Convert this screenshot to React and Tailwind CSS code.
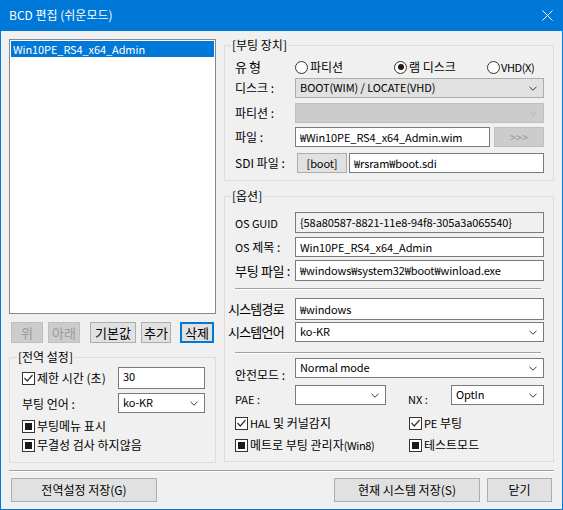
import React from "react";

const LAT = "text-[11px] tracking-[-0.1px]";

function Chevron({ color = "#3c3c3c" }) {
  return (
    <svg width="8" height="5" viewBox="0 0 8 5" className="shrink-0">
      <polyline points="0.5,0.8 4,4.2 7.5,0.8" fill="none" stroke={color} strokeWidth="1" />
    </svg>
  );
}

function Combo({ value, variant = "edit", className = "" }) {
  const v =
    variant === "btn"
      ? "bg-[#e1e1e1] border-[#adadad]"
      : variant === "disabled"
      ? "bg-[#cccccc] border-[#bfbfbf]"
      : "bg-white border-[#7a7a7a]";
  return (
    <div className={`flex items-center justify-between border pl-[4px] pr-[6px] ${v} ${className}`}>
      <span className={`leading-[16px] -mt-[2px] whitespace-nowrap ${LAT}`}>{value}</span>
      <Chevron color={variant === "disabled" ? "#b8b8b8" : "#3c3c3c"} />
    </div>
  );
}

function Input({ value, className = "", readOnly }) {
  return (
    <div
      className={`flex items-center border border-[#7a7a7a] pl-[4px] ${
        readOnly ? "bg-[#f0f0f0]" : "bg-white"
      } ${className}`}
    >
      <span className={`leading-[16px] -mt-[1px] whitespace-nowrap ${LAT}`}>{value}</span>
    </div>
  );
}

function Btn({ children, className = "", disabled, focus }) {
  const v = disabled
    ? "bg-[#cccccc] border border-[#bfbfbf] text-[#9a9a9a]"
    : focus
    ? "bg-[#e1e1e1] border-2 border-[#0078d7]"
    : "bg-[#e1e1e1] border border-[#adadad]";
  return (
    <div className={`flex items-center justify-center leading-[16px] whitespace-nowrap ${v} ${className}`}>
      {children}
    </div>
  );
}

function Check({ type }) {
  return (
    <span className="w-[13px] h-[13px] border border-[#333333] bg-white flex items-center justify-center shrink-0">
      {type === "check" && (
        <svg width="11" height="11" viewBox="0 0 11 11">
          <polyline points="1.5,5 4.3,8 9.5,2" fill="none" stroke="#333333" strokeWidth="1.2" />
        </svg>
      )}
      {type === "fill" && <span className="w-[7px] h-[7px] bg-[#1a1a1a]" />}
    </span>
  );
}

function Radio({ checked }) {
  return (
    <span className="w-[13px] h-[13px] rounded-full border border-[#333333] bg-white flex items-center justify-center shrink-0">
      {checked && <span className="w-[6px] h-[6px] rounded-full bg-[#1a1a1a]" />}
    </span>
  );
}

function CheckRow({ type, children, className = "" }) {
  return (
    <div className={`flex items-center gap-[2px] ${className}`}>
      <Check type={type} />
      <span className="leading-[16px] -mt-[1px] whitespace-nowrap">{children}</span>
    </div>
  );
}

function Sep({ className = "" }) {
  return <div className={`border-t border-t-[#a0a0a0] border-b border-b-white ${className}`} />;
}

function LeftCol() {
  return (
    <div className="w-[207px] flex flex-col pt-[2px]">
      <div className="h-[275px] border border-[#828790] bg-white p-[1px]">
        <div className={`h-[16px] bg-[#0078d7] text-white pl-[2px] leading-[16px] ${LAT}`}>Win10PE_RS4_x64_Admin</div>
      </div>
      <div className="mt-[8px] flex h-[21px] pl-[2px] text-[13px]">
        <Btn disabled className="w-[32px]">위</Btn>
        <Btn disabled className="w-[32px] ml-[5px]">아래</Btn>
        <Btn className="w-[46px] ml-[10px]">기본값</Btn>
        <Btn className="w-[30px] ml-[5px]">추가</Btn>
        <Btn focus className="w-[34px] ml-[9px]">삭제</Btn>
      </div>
      <fieldset className="mt-[6px] border border-[#dcdcdc] pb-[9px]">
        <legend className="ml-[7px] px-[1px] leading-[16px]">[전역 설정]</legend>
        <div className="pl-[12px] pr-[10px] flex flex-col">
          <div className="mt-[2px] h-[22px] flex items-center">
            <CheckRow type="check">제한 시간 (초)</CheckRow>
            <Input value="30" className="ml-auto w-[87px] h-[22px] items-start pt-[1px]" />
          </div>
          <div className="mt-[4px] h-[20px] flex items-center">
            <span className="leading-[16px] pt-[2px]">부팅 언어 :</span>
            <Combo value="ko-KR" className="ml-auto w-[87px] h-[20px]" />
          </div>
          <CheckRow type="fill" className="mt-[5px] h-[16px]">부팅메뉴 표시</CheckRow>
          <CheckRow type="fill" className="mt-[3px] h-[16px]">무결성 검사 하지않음</CheckRow>
        </div>
      </fieldset>
    </div>
  );
}

function Label({ children, className = "" }) {
  return <span className={`w-[60px] shrink-0 leading-[16px] whitespace-nowrap ${className}`}>{children}</span>;
}

function RightCol() {
  return (
    <div className="w-[330px] flex flex-col">
      <fieldset className="border border-[#dcdcdc] pb-[7px]">
        <legend className="ml-[6px] px-[1px] leading-[16px]">[부팅 장치]</legend>
        <div className="pl-[10px] pr-[9px] pt-[4px] flex flex-col">
          <div className="h-[20px] flex items-center">
            <Label className="text-[13px] tracking-[2px]">유형</Label>
            <div className="w-[99px] flex items-center gap-[2px]">
              <Radio />
              <span className="text-[12px] leading-[16px] -mt-[1px]">파티션</span>
            </div>
            <div className="w-[93px] flex items-center gap-[2px]">
              <Radio checked />
              <span className="leading-[16px] -mt-[1px]">램 디스크</span>
            </div>
            <div className="flex items-center gap-[1px]">
              <Radio />
              <span className="text-[11px] leading-[16px] -mt-[1px] tracking-[-0.4px]">VHD(X)</span>
            </div>
          </div>
          <div className="mt-[1px] h-[20px] flex items-center">
            <Label>디스크 :</Label>
            <Combo variant="btn" value="BOOT(WIM) / LOCATE(VHD)" className="flex-1 h-[20px]" />
          </div>
          <div className="mt-[5px] h-[20px] flex items-center">
            <Label>파티션 :</Label>
            <Combo variant="disabled" value="" className="flex-1 h-[20px]" />
          </div>
          <div className="mt-[4px] h-[20px] flex items-center">
            <Label>파일 :</Label>
            <Input value="₩Win10PE_RS4_x64_Admin.wim" className="w-[195px] h-[20px]" />
            <Btn disabled className={`ml-[4px] flex-1 h-[20px] ${LAT}`}>&gt;&gt;&gt;</Btn>
          </div>
          <div className="mt-[6px] h-[20px] flex items-center">
            <Label>SDI 파일 :</Label>
            <Btn className={`ml-[2px] w-[50px] h-[20px] ${LAT}`}>[boot]</Btn>
            <Input value="₩rsram₩boot.sdi" className="ml-[2px] flex-1 h-[20px]" />
          </div>
        </div>
      </fieldset>

      <fieldset className="mt-[7px] border border-[#dcdcdc] pb-[8px]">
        <legend className="ml-[6px] px-[1px] leading-[16px]">[옵션]</legend>
        <div className="pl-[10px] pr-[9px] flex flex-col">
          <div className="mt-[8px] h-[21px] flex items-center">
            <Label className={LAT}>OS GUID</Label>
            <Input readOnly value="{58a80587-8821-11e8-94f8-305a3a065540}" className="flex-1 h-[21px]" />
          </div>
          <div className="mt-[4px] h-[20px] flex items-center">
            <Label>
              <span className={LAT}>OS</span> 제목 :
            </Label>
            <Input value="Win10PE_RS4_x64_Admin" className="flex-1 h-[20px]" />
          </div>
          <div className="mt-[3px] h-[21px] flex items-center">
            <Label className="text-[13px] tracking-[-0.3px]">부팅 파일 :</Label>
            <Input value="₩windows₩system32₩boot₩winload.exe" className="flex-1 h-[21px]" />
          </div>
          <Sep className="mt-[7px] mr-[3px]" />
          <div className="mt-[8px] h-[22px] flex items-center">
            <Label className="-ml-[7px] w-[67px] text-[13px] tracking-[-0.8px]">시스템경로</Label>
            <Input value="₩windows" className="flex-1 h-[22px]" />
          </div>
          <div className="mt-[2px] h-[20px] flex items-center">
            <Label className="-ml-[7px] w-[67px] text-[13px] tracking-[-0.8px]">시스템언어</Label>
            <Combo value="ko-KR" className="flex-1 h-[20px]" />
          </div>
          <Sep className="mt-[10px] mr-[3px]" />
          <div className="mt-[4px] h-[20px] flex items-center">
            <Label className="pt-[14px]">안전모드 :</Label>
            <Combo value="Normal mode" className="flex-1 h-[20px]" />
          </div>
          <div className="mt-[7px] h-[20px] flex items-center">
            <Label className="pt-[8px] text-[11px]">PAE :</Label>
            <Combo value="" className="w-[91px] h-[20px]" />
            <span className="ml-[22px] w-[43px] pt-[8px] text-[11px] leading-[16px]">NX :</span>
            <Combo value="OptIn" className="flex-1 h-[20px]" />
          </div>
          <div className="mt-[10px] h-[16px] flex items-center">
            <CheckRow type="check" className="w-[174px]">
              <span className={LAT}>HAL</span> 및 커널감지
            </CheckRow>
            <CheckRow type="check">
              <span className={LAT}>PE</span> 부팅
            </CheckRow>
          </div>
          <div className="mt-[6px] h-[16px] flex items-center">
            <CheckRow type="fill" className="w-[174px]">
              메트로 부팅 관리자<span className="text-[11px] tracking-[-0.4px]">(Win8)</span>
            </CheckRow>
            <CheckRow type="fill">테스트모드</CheckRow>
          </div>
        </div>
      </fieldset>
    </div>
  );
}

export default function App() {
  return (
    <div className="w-[563px] h-[510px] border border-[#0078d7] bg-[#f0f0f0] flex flex-col font-['Noto_Sans_CJK_KR','Liberation_Sans',sans-serif] text-[12px] leading-[16px] text-black overflow-hidden">
      <div className="h-[30px] shrink-0 bg-[#0078d7] flex items-center justify-between pl-[8px] pr-[9px] text-white">
        <span className="text-[12px] leading-[16px] -mt-[3px]">BCD 편집 (쉬운모드)</span>
        <svg width="11" height="11" viewBox="0 0 11 11" className="-mt-[2px]">
          <path d="M0.5 0.5L10.5 10.5M10.5 0.5L0.5 10.5" stroke="white" strokeWidth="1" fill="none" />
        </svg>
      </div>
      <div className="flex-1 flex flex-col px-[8px]">
        <div className="flex gap-[8px] pt-[6px] items-start">
          <LeftCol />
          <RightCol />
        </div>
        <Sep className="mt-[7px]" />
        <div className="mt-[6px] flex h-[24px] px-[2px]">
          <Btn className="w-[146px] h-[24px]">전역설정 저장(G)</Btn>
          <Btn className="ml-auto w-[146px] h-[24px]">현재 시스템 저장(S)</Btn>
          <Btn className="ml-[7px] w-[65px] h-[24px]">닫기</Btn>
        </div>
      </div>
    </div>
  );
}
